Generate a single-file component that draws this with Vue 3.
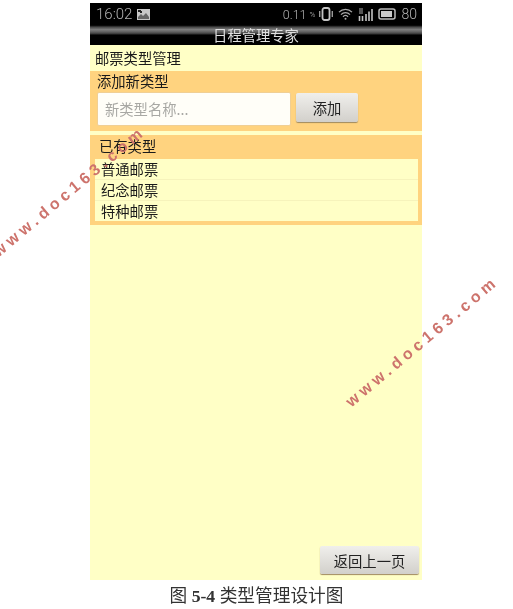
<template>
  <div class="page">
    <div class="phone">
      <div class="status">
        <span class="time">16:02</span>
        <svg class="pic" width="13" height="11" viewBox="0 0 13 11">
          <rect width="13" height="11" fill="#c8c8c8" />
          <path d="M1 1h3v1h1v2H3V3H1Z" fill="#222" />
          <path d="M1 10V8l3-3 2 2 3-3 3 4v2Z" fill="#666" />
        </svg>
        <span class="spacer"></span>
        <span class="speed">0.11</span>
        <span class="unit">%</span>
        <svg width="14" height="14" viewBox="0 0 14 14" class="ico">
          <rect x="3.500" y="1" width="7" height="12" rx="2" fill="none" stroke="#c4c4c4" stroke-width="1.800" />
          <path d="M0.700 4v6M13.300 4v6" stroke="#999" stroke-width="1.400" />
        </svg>
        <svg width="15" height="12" viewBox="0 0 15 12" class="ico">
          <path d="M1 4.200a9 9 0 0 1 13 0M3 6.600a6 6 0 0 1 9 0M5 8.800a3 3 0 0 1 5 0" fill="none" stroke="#aaa" stroke-width="1.200" />
          <circle cx="7.500" cy="10.800" r="1" fill="#aaa" />
        </svg>
        <svg width="15" height="13" viewBox="0 0 15 13" class="ico">
          <path d="M1 1h4M1 3h4M1 5h4" stroke="#aaa" stroke-width="1" />
          <path d="M1.500 13V8M4.500 13V8M8 13V6M11 13V3.500M14 13V1" stroke="#c4c4c4" stroke-width="1.600" />
        </svg>
        <svg width="18" height="12" viewBox="0 0 18 12" class="ico bat-ico">
          <rect x="1" y="1" width="16" height="10" rx="2" fill="none" stroke="#bbb" stroke-width="1.500" />
          <rect x="3" y="3" width="11" height="6" fill="#c8c8c8" />
        </svg>
        <span class="batt">80</span>
      </div>
      <div class="titlebar">日程管理专家</div>
      <div class="body">
        <div class="heading">邮票类型管理</div>
        <section class="add">
          <div class="label">添加新类型</div>
          <div class="row">
            <div class="input">新类型名称...</div>
            <button class="btn add-btn">添加</button>
          </div>
        </section>
        <section class="existing">
          <div class="label exist-label">已有类型</div>
          <ul class="list">
            <li v-for="t in types" :key="t">{{ t }}</li>
          </ul>
        </section>
        <div class="grow"></div>
        <div class="foot"><button class="btn back">返回上一页</button></div>
      </div>
    </div>
    <div class="caption">图 <b>5-4</b> 类型管理设计图</div>
    <div class="mark mark1">www.doc163.com</div>
    <div class="mark mark2">www.doc163.com</div>
  </div>
</template>

<script setup>
const types = ['普通邮票', '纪念邮票', '特种邮票']
</script>

<style>
html, body { background: #fff; }
</style>

<style scoped>
.page {
  position: relative;
  width: 513px;
  height: 609px;
  overflow: hidden;
  background: #fff;
  padding-top: 3px;
  box-sizing: border-box;
  font-family: "Noto Sans CJK SC", "Noto Sans", sans-serif;
  filter: blur(0.3px);
}
.phone {
  width: 332px;
  height: 577px;
  margin-left: 90px;
  display: flex;
  flex-direction: column;
}
.status {
  height: 22px;
  background: #000;
  color: #b4b4b4;
  display: flex;
  align-items: center;
  padding: 0 5px 0 6px;
  font-family: Roboto, sans-serif;
  font-weight: 300;
  flex: none;
}
.time { font-size: 15px; margin-right: 5px; }
.spacer { flex: 1; }
.speed { font-size: 12.500px; }
.unit { font-size: 8px; margin: 0 4px 0 3px; }
.ico { margin-right: 5px; }
.bat-ico { margin-right: 5px; }
.batt { font-size: 14px; }
.titlebar {
  height: 20px;
  flex: none;
  background: linear-gradient(#0a0a0a 0, #0a0a0a 1px, #555 2px, #4a4a4a 3px, #808080 4px, #6e6e6e 6px, #4c4c4c 8px, #333 9px, #000 10px, #000 100%);
  color: #e0e0e0;
  font-size: 14.300px;
  line-height: 19px;
  text-align: center;
}
.body {
  flex: 1;
  background: #ffffc6;
  display: flex;
  flex-direction: column;
  min-height: 0;
  color: #1a1a1a;
  font-size: 14.300px;
}
.heading {
  height: 26px;
  line-height: 26px;
  padding-left: 5px;
  flex: none;
}
.add, .existing { background: #ffd37f; flex: none; }
.add { height: 60px; }
.existing { height: 90px; margin-top: 4px; padding: 0 4px 0 5px; }
.label {
  height: 21px;
  line-height: 19px;
  padding-left: 7px;
}
.exist-label { height: 24px; line-height: 22px; padding-left: 4px; }
.row {
  display: flex;
  align-items: flex-start;
  padding-left: 7px;
  gap: 5px;
}
.input {
  width: 194px;
  height: 34px;
  box-sizing: border-box;
  background: #fffef8;
  border: 1px solid #f0cf94;
  border-radius: 2px;
  color: #a8a8a4;
  line-height: 32px;
  padding-left: 7px;
}
.btn {
  font-family: inherit;
  font-size: 14.300px;
  color: #222;
  background: linear-gradient(#f0efec, #d2d0cb);
  border: none;
  border-radius: 2px;
  box-shadow: 0 1px 1px #a08a60;
  padding: 0;
}
.add-btn { width: 62px; height: 29px; margin-top: 1px; }
.list {
  list-style: none;
  margin: 0;
  padding: 0;
  background: #ffffc6;
  height: 62px;
}
.list li {
  height: 20px;
  line-height: 20px;
  padding-left: 6px;
  border-bottom: 1px solid #f6f3bb;
}
.list li:last-child { border-bottom: none; }
.grow { flex: 1; }
.foot {
  display: flex;
  justify-content: flex-end;
  padding: 0 3px 6px 0;
}
.back { width: 99px; height: 28px; }
.caption {
  text-align: center;
  font-family: "Liberation Serif", "Noto Sans CJK SC", serif;
  font-size: 17.700px;
  line-height: 20px;
  margin-top: 6px;
  color: #333;
}
.mark {
  position: absolute;
  color: #cd736c;
  font-family: "Liberation Sans", sans-serif;
  font-weight: bold;
  font-size: 16px;
  line-height: 20px;
  letter-spacing: 4.300px;
  white-space: nowrap;
  transform-origin: left center;
  transform: rotate(-40deg);
}
.mark1 { left: -5px; top: 244px; }
.mark2 { left: 348px; top: 394px; }
</style>
